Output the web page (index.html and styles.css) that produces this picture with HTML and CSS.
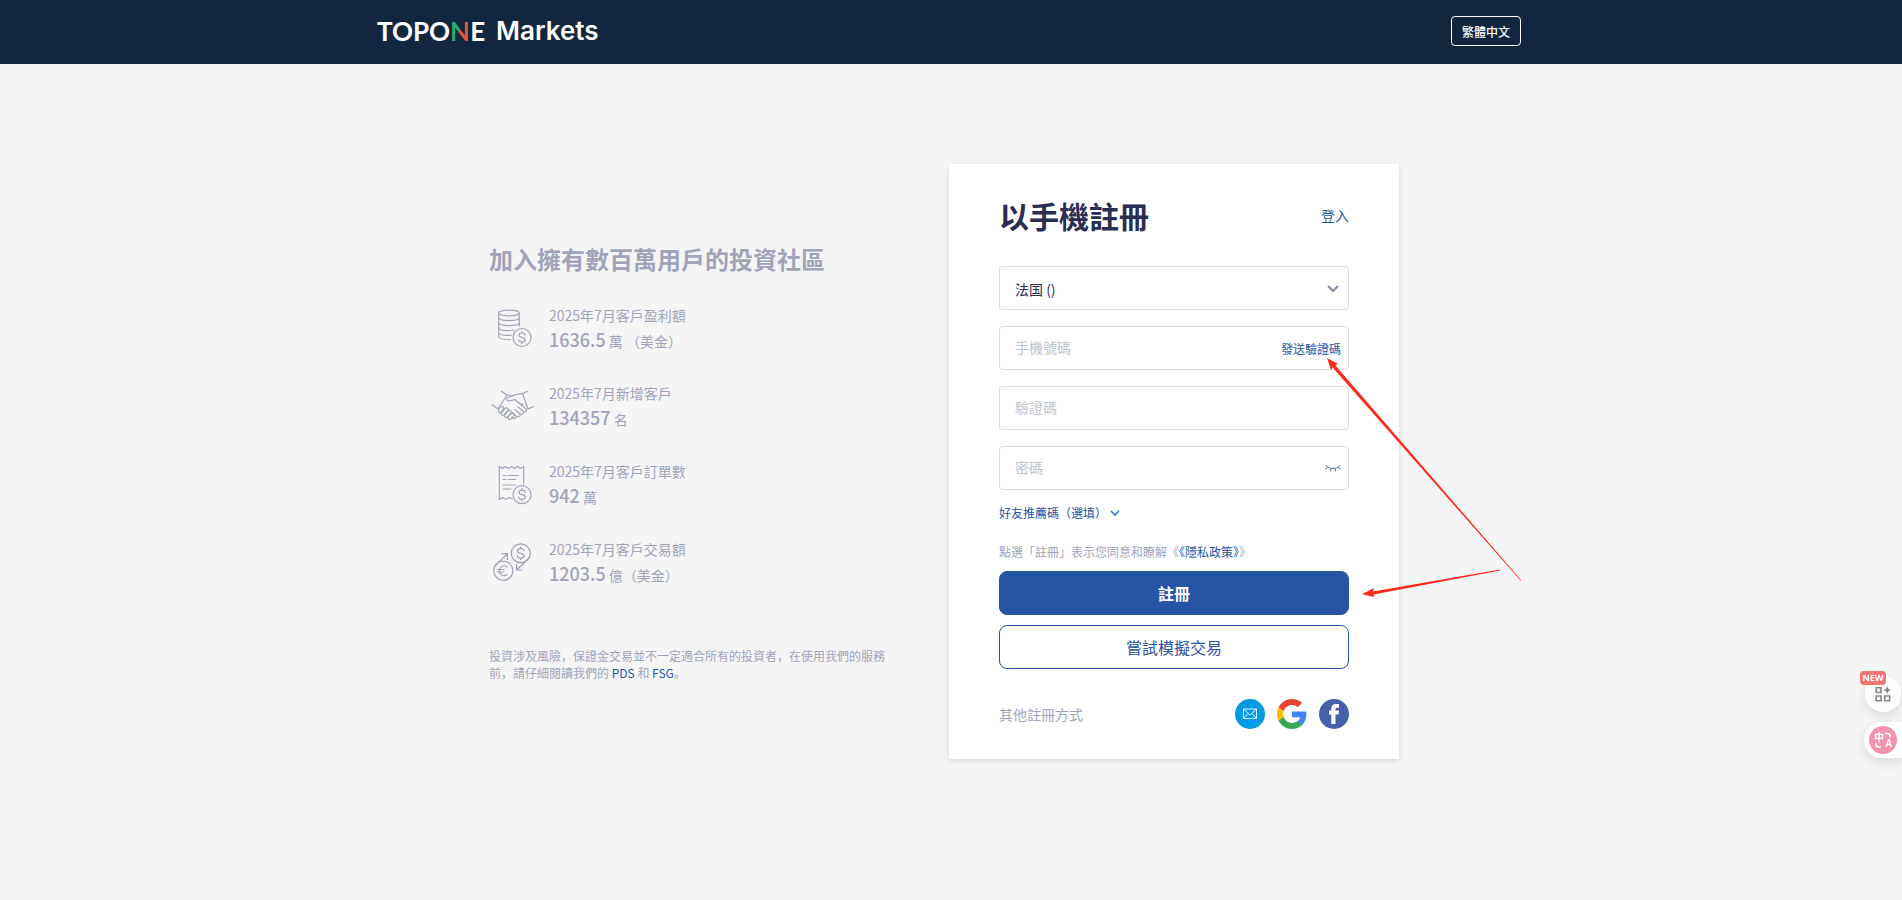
FILE: index.html
```html
<!DOCTYPE html>
<html lang="zh-CN">
<head>
  <meta charset="UTF-8" />
  <meta name="viewport" content="width=device-width, initial-scale=1.0" />
  <title>TOPONE Markets</title>
  <link rel="stylesheet" href="styles.css">
</head>
<body>
  <header class="header">
    <div class="header-inner">
      <a class="logo" href="#"><span class="logo-name">TOPO<span class="logo-n">N</span>E</span><span class="logo-sub">Markets</span></a>
      <button class="lang" type="button">繁體中文</button>
    </div>
  </header>

  <!-- shared dollar coin -->
  <svg class="defs" aria-hidden="true">
    <symbol id="dollar" viewBox="0 0 20 20">
      <circle cx="10" cy="10" r="9"/>
      <path d="M13 7.5C13 6 11.6 5.5 10 5.5S7 6.200 7 7.700S8.400 9.700 10 10S13.200 10.800 13.200 12.400S11.700 14.500 10 14.500S6.800 13.800 6.800 12.300M10 3.800V5.500M10 14.500V16.200"/>
    </symbol>
  </svg>

  <main class="main">
    <section class="intro">
      <h2>加入擁有數百萬用戶的投資社區</h2>
      <ul class="stats">
        <li>
          <svg class="stat-icon" viewBox="0 0 48 48">
            <ellipse cx="20" cy="10" rx="10.300" ry="2.800"/>
            <path d="M9.700 10V34C10 35.500 14 36.500 21 36.500M30.300 10V23M9.700 15C11 18.500 29 18.500 30.300 15M9.700 20C11 23.500 29 23.500 30.300 20M9.700 25C11 27.500 18 28 25 27M9.700 30C11 32 16 32.500 22 32.200"/>
            <use href="#dollar" x="23" y="24.500" width="20" height="20"/>
          </svg>
          <div class="stat-text">
            <p>2025年7月客戶盈利額</p>
            <p class="value"><strong>1636.5</strong> 萬 （美金）</p>
          </div>
        </li>
        <li>
          <svg class="stat-icon" viewBox="0 0 48 48">
            <path d="M12.300 10.300L18 14L9 28M3 23.700L9 28M38.700 10.300L33.500 12.500L39 28M44.500 25.500L39 28M18 14C22 15 24 15 27 13.500C29.500 12.800 31.500 12.700 33.500 12.500M27 13.500L18 17C17 19 18.500 20 20.500 19.800L26 18.500L29.500 22L34 23.500M29 21L37.500 28.500C38 30.500 36 31.500 34.500 30.500L29 26M34.500 30.500C35 33 33 34 31 33L26 28.500M31 33C31.500 35.500 29.500 36.500 27.500 35.500L23 31.500M27.500 35.500C27 37.500 25 38 22.500 36.500"/>
            <path d="M10 29C9 27 13 24 14.500 26.500C15 28 12 32 10.500 31.500C9.500 31 9.500 30 10 29ZM12.500 31.500L16.500 27C19 26 20 28.500 18.500 30L15 34C13 35 11.500 33.500 12.500 31.500ZM15.500 34L19.500 29.500C22 28.500 23 31 21.500 32.500L18.500 36C16.500 37 15 35.500 15.500 34ZM19 36L22.500 32C25 31.500 25.500 33.500 24.500 35L22.500 38C20.500 39 18.500 38 19 36Z"/>
          </svg>
          <div class="stat-text">
            <p>2025年7月新增客戶</p>
            <p class="value"><strong>134357</strong> 名</p>
          </div>
        </li>
        <li>
          <svg class="stat-icon" viewBox="0 0 48 48">
            <path d="M10.300 7.500V40.500L13.500 38.500L17 40.500L20 38.500L23 40M10.300 7.500L13.500 9.500L16.500 7.500L19.500 9.500L22.500 7.500L25.500 9.500L28.500 7.500L31.500 9.500L34.700 7.500V25"/>
            <path d="M14 16.500H17M19 16.500H29.700M14 20.500H17M19 20.500H26.700M14 26H26.700M14 30H22"/>
            <use href="#dollar" x="23" y="25.700" width="20" height="20"/>
          </svg>
          <div class="stat-text">
            <p>2025年7月客戶訂單數</p>
            <p class="value"><strong>942</strong> 萬</p>
          </div>
        </li>
        <li>
          <svg class="stat-icon" viewBox="0 0 48 48">
            <use href="#dollar" x="21.200" y="5.800" width="21" height="21"/>
            <circle cx="14.300" cy="33.700" r="9.600"/>
            <path d="M18 30C14 27 10.500 30 10.500 33.700S14 40.500 18 37.500M8.500 32.500H15M8.500 35H15"/>
            <path d="M5.800 29L18.500 16.700M12.700 16.700H18.500V22.500M40.500 20.500L27.700 33M27.700 27.500V33H33"/>
          </svg>
          <div class="stat-text">
            <p>2025年7月客戶交易額</p>
            <p class="value"><strong>1203.5</strong> 億（美金）</p>
          </div>
        </li>
      </ul>
      <p class="risk">投資涉及風險，保證金交易並不一定適合所有的投資者，在使用我們的服務前，請仔細閱讀我們的 <a href="#">PDS</a> 和 <a href="#">FSG</a>。</p>
    </section>

    <section class="card">
      <form>
        <div class="card-head">
          <h1>以手機註冊</h1>
          <a href="#">登入</a>
        </div>

        <div class="fields">
          <div class="field">
            <select aria-label="國家">
              <option>法国 ()</option>
            </select>
            <svg class="arrow-down" viewBox="0 0 12 8"><path d="M1 1L6 6L11 1"/></svg>
          </div>
          <div class="field">
            <input type="tel" placeholder="手機號碼" aria-label="手機號碼">
            <button class="send-code" type="button">發送驗證碼</button>
          </div>
          <div class="field">
            <input type="text" placeholder="驗證碼" aria-label="驗證碼">
          </div>
          <div class="field">
            <input type="password" placeholder="密碼" aria-label="密碼">
            <button class="eye" type="button" aria-label="顯示密碼">
              <svg viewBox="0 0 16 8"><path d="M0.500 1C4 5.500 12 5.500 15.500 1M3 3L0.500 5M6 4.300L5.200 7.300M10 4.300L10.800 7.300M13 3L15.500 5"/></svg>
            </button>
          </div>
        </div>

        <button class="referral" type="button">好友推薦碼（選填）
          <svg viewBox="0 0 10 7"><path d="M1 1L5 5L9 1"/></svg>
        </button>
        <p class="terms">點選「註冊」表示您同意和瞭解《<a href="#">《隱私政策》</a>》</p>

        <div class="actions">
          <button class="btn btn-primary" type="submit">註冊</button>
          <button class="btn btn-outline" type="button">嘗試模擬交易</button>
        </div>

        <div class="others">
          <span>其他註冊方式</span>
          <div class="social">
            <a href="#" aria-label="Email">
              <svg viewBox="0 0 30 30"><circle cx="15" cy="15" r="15" fill="#0299e6"/><path d="M8.500 10H21.500V19.500H8.500ZM8.500 10L15 16L21.500 10M8.500 19.500L13 14.500M21.500 19.500L17 14.500" fill="none" stroke="#fff" stroke-width="0.900"/></svg>
            </a>
            <a href="#" aria-label="Google">
              <svg viewBox="0 0 48 48">
                <path fill="#ea4335" d="M24 9.500c3.540 0 6.710 1.220 9.210 3.600l6.850-6.850C35.900 2.380 30.470 0 24 0 14.620 0 6.510 5.380 2.560 13.220l7.980 6.190C12.430 13.720 17.740 9.500 24 9.500z"/>
                <path fill="#4285f4" d="M46.980 24.550c0-1.570-.15-3.090-.38-4.550H24v9.020h12.940c-.58 2.960-2.260 5.480-4.780 7.180l7.730 6c4.510-4.180 7.090-10.360 7.090-17.650z"/>
                <path fill="#fbbc05" d="M10.530 28.590c-.48-1.450-.76-2.990-.76-4.590s.27-3.140.76-4.590l-7.980-6.190C.92 16.460 0 20.120 0 24c0 3.880.92 7.540 2.560 10.780l7.970-6.190z"/>
                <path fill="#34a853" d="M24 48c6.480 0 11.930-2.130 15.890-5.810l-7.730-6c-2.150 1.450-4.920 2.300-8.160 2.300-6.260 0-11.570-4.220-13.470-9.910l-7.980 6.190C6.510 42.620 14.620 48 24 48z"/>
              </svg>
            </a>
            <a href="#" aria-label="Facebook">
              <svg viewBox="0 0 30 30"><circle cx="15" cy="15" r="15" fill="#4760ab"/><path fill="#fff" d="M12.300 25V15.500H10V11.500H12.300V9.500C12.300 6.500 14 5 17 5H20V8.800H18C16.900 8.800 16.500 9.200 16.500 10.200V11.500H20L19.500 15.500H16.500V25Z"/></svg>
            </a>
          </div>
        </div>
      </form>

      <!-- red arrows: send code and register -->
      <svg class="marks" viewBox="0 0 210 240" aria-hidden="true">
        <path d="M7 8L18 14L15.200 15.200L201 230L200.500 230.500L12.600 17.500L11 20Z"/>
        <path d="M42 244L54 238L53 241.500L180 219.500V220.500L53.500 244.500L54 247Z"/>
      </svg>
    </section>
  </main>

  <aside class="tools">
    <button class="tool-apps" type="button" aria-label="Apps">
      <svg viewBox="0 0 16 16"><path d="M1.200 1.700H6V6.500H1.200ZM1.200 10H6V14.800H1.200ZM9.800 10H14.600V14.800H9.800Z" fill="none" stroke="#888" stroke-width="1.600"/><path d="M12.200 0L13.400 2.900L16.200 4L13.400 5.200L12.200 8L11 5.200L8.200 4L11 2.900Z" fill="#888"/></svg>
      <span class="badge">NEW</span>
    </button>
    <button class="tool-translate" type="button" aria-label="翻譯">
      <span class="pink"><span class="zh">中</span><span class="en">A</span>
        <svg viewBox="0 0 28 28"><path d="M16 7.500H18.500Q21 7.500 21 10V11.500M7 17V18.500Q7 21 9.500 21H12"/></svg>
      </span>
    </button>
  </aside>
</body>
</html>
```
FILE: styles.css
```css
* {
  box-sizing: border-box;
}

body {
  margin: 0;
  min-height: 100vh;
  background-color: #f5f5f5;
  color: #a1a4b9;
  font-family: "Noto Sans CJK SC", sans-serif;
  font-size: 14px;
}

h1, h2, p, ul {
  margin: 0;
  padding: 0;
}

a {
  color: #2755a5;
  text-decoration: none;
}

button, input, select {
  font-family: inherit;
}

button {
  padding: 0;
  border: 0;
  background: none;
  cursor: pointer;
}

svg {
  display: block;
}

.defs {
  position: absolute;
  width: 0;
  height: 0;
}

.header {
  background-color: #12273f;
}

.header-inner {
  display: flex;
  justify-content: space-between;
  align-items: center;
  max-width: 1148px;
  height: 64px;
  margin: 0 auto;
  padding: 0 4px 2px 0;
}

.logo {
  display: flex;
  align-items: center;
  gap: 11px;
  color: #fff;
  font-family: Inter, sans-serif;
  font-size: 26px;
  line-height: 32px;
  font-weight: 600;
}

.logo-name {
  font-family: Lato, sans-serif;
  font-weight: 700;
}

.logo-n {
  background: linear-gradient(90deg, #2bab70 52%, #e2523c 52%);
  -webkit-background-clip: text;
  background-clip: text;
  color: transparent;
}

.lang {
  width: 70px;
  height: 30px;
  border: 1px solid #fff;
  border-radius: 4px;
  color: #fff;
  font-size: 12px;
  font-weight: 500;
}

.main {
  display: flex;
  justify-content: space-between;
  align-items: flex-start;
  max-width: 924px;
  margin: 0 auto;
  padding: 100px 14px 40px 0;
}

.intro {
  max-width: 400px;
  padding-top: 77px;
}

.intro h2 {
  margin-bottom: 26px;
  font-size: 24px;
  line-height: 36px;
}

.stats {
  display: flex;
  flex-direction: column;
  gap: 30px;
  list-style: none;
}

.stats li {
  display: flex;
  gap: 12px;
}

.stat-icon {
  width: 48px;
  height: 48px;
  fill: none;
  stroke: #a1a4b9;
  stroke-width: 1.2;
  stroke-linecap: round;
  stroke-linejoin: round;
}

.stat-text p {
  height: 24px;
  line-height: 24px;
}

.value strong {
  font-size: 18px;
  font-weight: 500;
}

.risk {
  margin-top: 62px;
  font-size: 12px;
  line-height: 17px;
}

.card {
  position: relative;
  width: 450px;
  padding: 30px 50px;
  background-color: #fff;
  box-shadow: 0 2px 6px rgba(0, 0, 0, 0.12);
}

.card-head {
  display: flex;
  justify-content: space-between;
  align-items: center;
  height: 42px;
  margin-bottom: 30px;
}

.card-head h1 {
  color: #2b2d52;
  font-size: 30px;
  line-height: 42px;
}

.fields {
  display: flex;
  flex-direction: column;
  gap: 16px;
}

.field {
  display: flex;
  align-items: center;
  height: 44px;
  padding-right: 7px;
  border: 1px solid #dcdde6;
  border-radius: 4px;
}

.field input,
.field select {
  flex: 1;
  min-width: 0;
  height: 42px;
  padding: 0 0 2px 15px;
  border: 0;
  outline: 0;
  background: none;
  color: #2b2d52;
  font-size: 14px;
  appearance: none;
}

.field select {
  padding: 2px 0 0 15px;
}

.field input::placeholder {
  color: #c0c4cc;
}

.arrow-down {
  width: 12px;
  height: 8px;
  margin: 2px 2px 0 0;
  fill: none;
  stroke: #85879f;
  stroke-width: 2;
}

.send-code {
  color: #2755a5;
  font-size: 12px;
}

.eye svg {
  width: 16px;
  height: 8px;
  fill: none;
  stroke: #7388a8;
  stroke-width: 1.2;
}

.referral {
  display: flex;
  align-items: center;
  gap: 3px;
  margin-top: 14px;
  color: #2755a5;
  font-size: 12px;
  line-height: 18px;
}

.referral svg {
  width: 10px;
  height: 7px;
  fill: none;
  stroke: #2b7de9;
  stroke-width: 1.6;
}

.terms {
  margin-top: 21px;
  font-size: 12px;
  line-height: 18px;
}

.actions {
  display: flex;
  flex-direction: column;
  gap: 10px;
  margin-top: 10px;
}

.btn {
  height: 44px;
  border: 1px solid #2755a5;
  border-radius: 8px;
  font-size: 16px;
}

.btn-primary {
  background-color: #2755a5;
  color: #fff;
  font-weight: bold;
}

.btn-outline {
  background-color: #fff;
  color: #2755a5;
}

.others {
  display: flex;
  justify-content: space-between;
  align-items: center;
  margin-top: 30px;
}

.social {
  display: flex;
  gap: 12px;
}

.social svg {
  width: 30px;
  height: 30px;
}

.marks {
  position: absolute;
  top: 186px;
  left: 371px;
  width: 210px;
  height: 240px;
  overflow: visible;
  fill: #ff2a1a;
  pointer-events: none;
}

/* floating tools on the right edge */
.tools {
  position: fixed;
  right: 0;
  bottom: 142px;
  display: flex;
  flex-direction: column;
  align-items: flex-end;
  gap: 10px;
}

.tool-apps {
  position: relative;
  display: flex;
  align-items: center;
  justify-content: center;
  width: 36px;
  height: 36px;
  margin-right: 1px;
  border-radius: 50%;
  background-color: #fff;
  box-shadow: 0 4px 12px rgba(0, 0, 0, 0.12);
}

.tool-apps svg {
  width: 16px;
  height: 16px;
}

.badge {
  position: absolute;
  top: -5px;
  left: -5px;
  width: 26px;
  height: 14px;
  border-radius: 4px;
  background-color: #f57474;
  color: #fff;
  font-family: "Noto Sans", sans-serif;
  font-size: 9px;
  line-height: 14px;
  font-weight: bold;
}

.tool-translate {
  width: 38px;
  height: 36px;
  padding: 4px 5px;
  border-radius: 18px 0 0 18px;
  background-color: #fff;
  box-shadow: 0 4px 12px rgba(0, 0, 0, 0.12);
}

.pink {
  position: relative;
  display: block;
  width: 28px;
  height: 28px;
  border-radius: 50%;
  background-color: #f095ab;
  color: #fff;
  font-weight: bold;
}

.pink svg {
  fill: none;
  stroke: #fff;
  stroke-width: 1.6;
}

.zh, .en {
  position: absolute;
  font-size: 10px;
  line-height: 12px;
}

.zh {
  top: 5px;
  left: 5px;
}

.en {
  right: 5px;
  bottom: 5px;
}
```
